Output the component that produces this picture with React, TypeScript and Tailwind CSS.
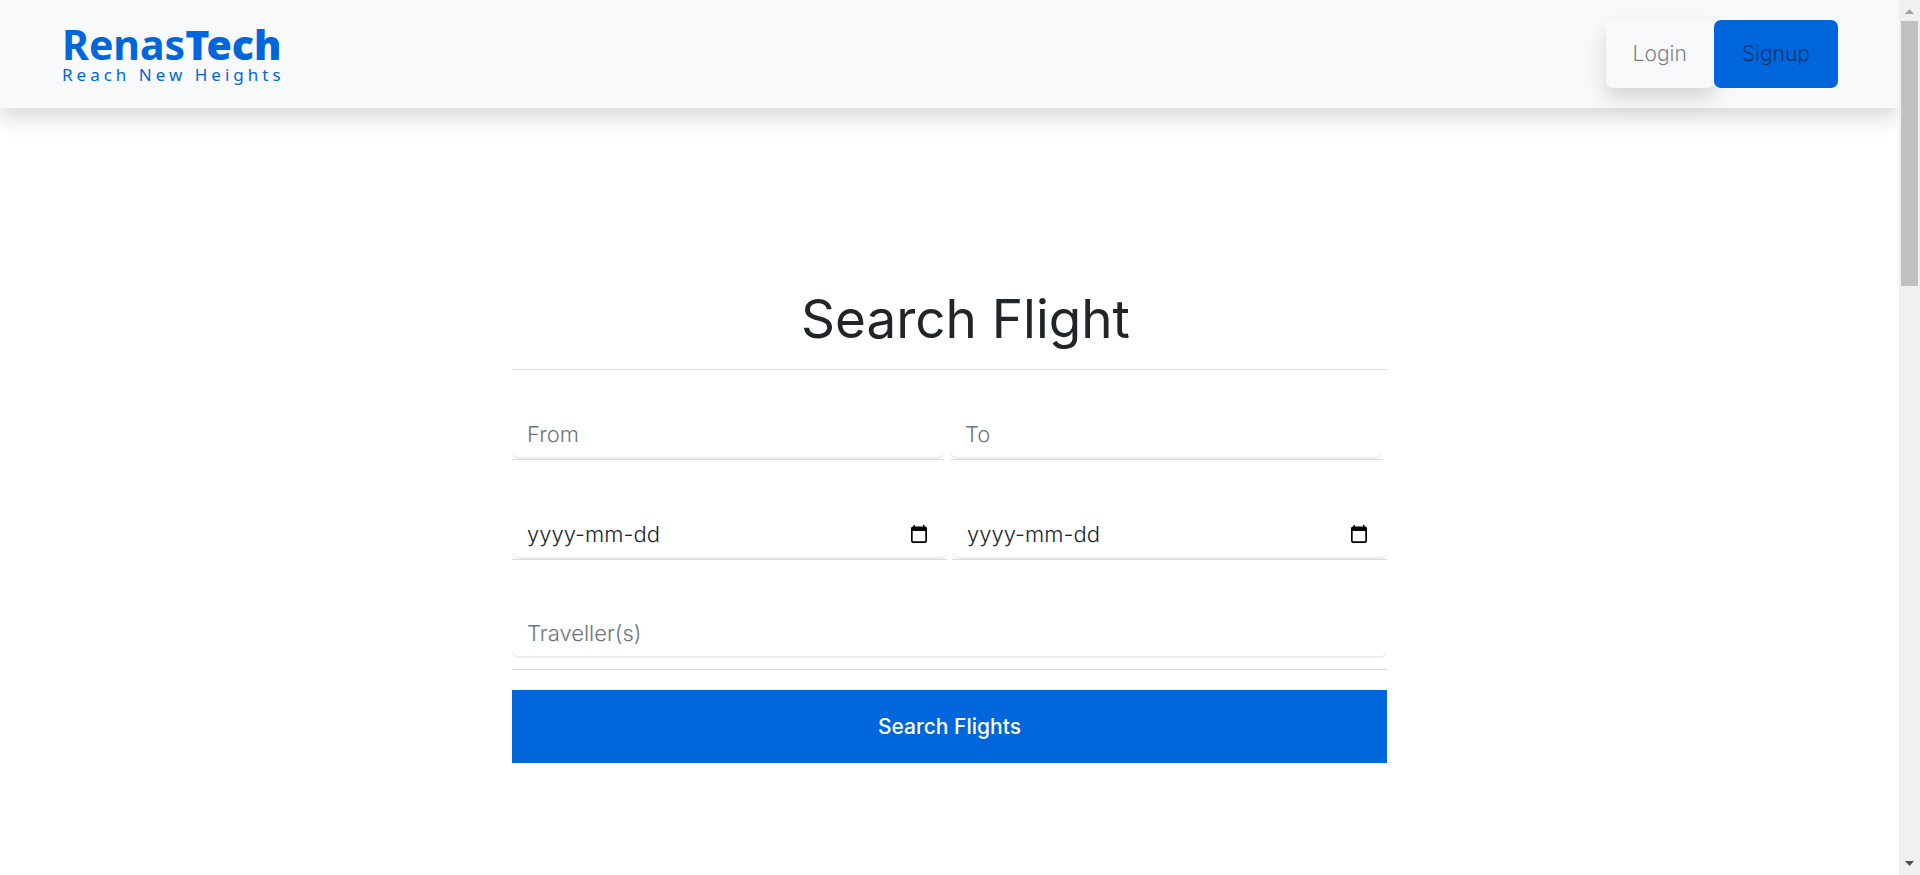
import React from "react";

function Logo() {
  return (
    <a href="#" className="flex flex-col text-[#0066dc]" aria-label="RenasTech, Reach New Heights">
      <span className="flex items-baseline text-[41px] leading-[42px] font-['Noto_Sans',sans-serif]">
        <span className="font-bold">Renas</span>
        <span className="font-black">Tech</span>
      </span>
      <span className="text-[17px] leading-[20px] tracking-[4px] whitespace-nowrap font-['Noto_Sans',sans-serif]">
        Reach New Heights
      </span>
    </a>
  );
}

function Header() {
  return (
    <header className="flex items-center justify-between bg-[#f8f9fb] py-5 pl-[62px] pr-[61px] shadow-[0_10px_20px_rgba(0,0,0,0.15)]">
      <Logo />
      <nav className="flex text-[21px] font-light leading-[30px]">
        <a
          href="#login"
          className="rounded-[7px] bg-[#f8f9fb] px-[27px] py-[19px] text-black/50 shadow-[0_10px_20px_rgba(0,0,0,0.15)]"
        >
          Login
        </a>
        <a href="#signup" className="relative rounded-[7px] bg-[#0066dc] px-7 py-[19px] text-black/50">
          Signup
        </a>
      </nav>
    </header>
  );
}

type FieldProps = { id: string; label: string; underlined?: boolean };

function Field({ id, label, underlined = true }: FieldProps) {
  return (
    <div className={underlined ? "min-w-0 flex-1 border-b border-[#dcdcdc]" : "min-w-0 flex-1"}>
      <input
        id={id}
        type="text"
        aria-label={label}
        placeholder={label}
        className="block h-[50px] w-full rounded-[7px] px-[15px] text-[22px] font-light shadow-[inset_0_-2px_0_#ededed] outline-none placeholder:text-[#6c757d]"
      />
    </div>
  );
}

function DateField({ id, label }: FieldProps) {
  return (
    <div className="min-w-0 flex-1 border-b border-[#dcdcdc]">
      <div className="flex h-[50px] items-center rounded-[7px] pl-[15px] pr-[19px] shadow-[inset_0_-2px_0_#ededed]">
        <input
          id={id}
          type="text"
          aria-label={label}
          placeholder="yyyy-mm-dd"
          className="min-w-0 flex-1 text-[22px] font-light outline-none placeholder:text-[#212529]"
        />
        <button type="button" aria-label={"Choose " + label}>
          <svg width="18" height="20" viewBox="0 0 18 20" className="block">
            <path
              d="M3.500 1H5v1.500h8V1h1.500v1.500h.5a2 2 0 0 1 2 2V17a2 2 0 0 1-2 2H3a2 2 0 0 1-2-2V4.500a2 2 0 0 1 2-2h.5zM2.700 7v10.300h12.600V7z"
              fillRule="evenodd"
              fill="#000"
            />
          </svg>
        </button>
      </div>
    </div>
  );
}

function SearchForm() {
  return (
    <form className="mx-auto mt-[180px] w-full max-w-[875px]" onSubmit={(e) => e.preventDefault()}>
      <h1 className="pl-8 text-center text-[53px] leading-[62px] text-[#212529]">Search Flight</h1>
      <hr className="mt-[19px] border-[#dfdfdf]" />
      <div className="mt-[39px] flex gap-1.5 pr-[5px]">
        <Field id="from" label="From" />
        <Field id="to" label="To" />
      </div>
      <div className="mt-[49px] flex gap-[5px]">
        <DateField id="depart" label="Departure date" />
        <DateField id="return" label="Return date" />
      </div>
      <div className="mt-12 flex">
        <Field id="travellers" label="Traveller(s)" underlined={false} />
      </div>
      <hr className="mt-[11px] border-[#dfdfdf]" />
      <button
        type="submit"
        className="mt-5 h-[73px] w-full bg-[#0066dc] text-[21px] font-medium text-white"
      >
        Search Flights
      </button>
    </form>
  );
}

function ScrollRail() {
  return (
    <div aria-hidden="true" className="flex w-[21px] shrink-0 flex-col items-center bg-[#f0f0f0]">
      <svg width="21" height="21" viewBox="0 0 21 21" className="block shrink-0">
        <path d="M6 14h9l-4.500-5z" fill="#a3a3a3" />
      </svg>
      <div className="h-[265px] w-[17px] bg-[#c1c1c1]" />
      <svg width="21" height="21" viewBox="0 0 21 21" className="mt-auto block shrink-0">
        <path d="M6 7h9l-4.500 5z" fill="#505050" />
      </svg>
    </div>
  );
}

export default function App() {
  return (
    <div className="flex h-screen overflow-hidden bg-white font-[Inter,sans-serif]">
      <div className="min-w-0 flex-1 overflow-hidden">
        <Header />
        <main>
          <SearchForm />
        </main>
      </div>
      <ScrollRail />
    </div>
  );
}
